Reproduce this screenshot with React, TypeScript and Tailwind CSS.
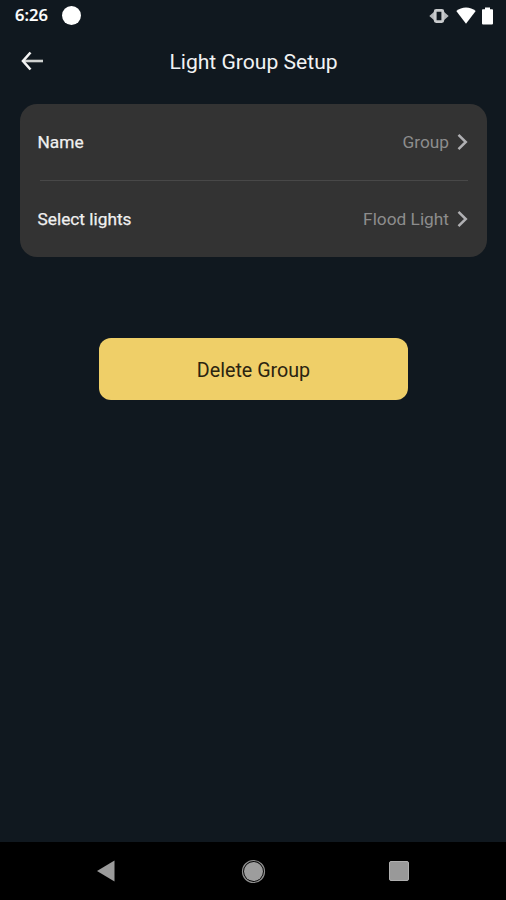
const content = {
  time: "6:26",
  header: "Light Group Setup",
  buttonText: "Delete Group",
};

const rows = [
  { label: "Name", value: "Group" },
  { label: "Select lights", value: "Flood Light" },
];

const StatusBar = () => (
  <div className="flex h-[31px] items-center justify-between pl-[15px] pr-[13px] text-white">
    <div className="flex items-center gap-[13px]">
      <span className="w-[34px] whitespace-nowrap font-['Open_Sans',sans-serif] text-[16.5px] font-semibold leading-none [-webkit-text-stroke:0.2px_#fff]">
        {content.time}
      </span>
      <span className="h-[19px] w-[19px] rounded-full bg-white" />
    </div>
    <div className="flex items-center">
      <svg width="20" height="14" viewBox="0 0 20 14">
        <path d="M6 2 0.3 7 6 12ZM14 2 19.7 7 14 12Z" fill="#b4b7ba" />
        <rect x="6.2" y="1.4" width="7.6" height="11.2" rx="1" fill="#10181f" stroke="#c9cbcd" strokeWidth="2.8" />
      </svg>
      <svg className="mb-px ml-[7px]" width="20" height="17" viewBox="0 0 20 17">
        <path d="M0.3 4C5.5-.8 14.5-.8 19.7 4L10 16.7Z" fill="#fff" />
      </svg>
      <svg className="ml-[6px]" width="11" height="18" viewBox="0 0 11 18">
        <path d="M3 0.5h5v1.8h2.2q.8 0 .8.8v13.4q0 1-1 1H1q-1 0-1-1V3.1q0-.8.8-.8H3Z" fill="#fff" />
      </svg>
    </div>
  </div>
);

const Header = () => (
  <header className="grid h-[60px] grid-cols-[50px_1fr_50px] items-center">
    <button className="pl-[21px]" aria-label="Back">
      <svg width="23" height="20" viewBox="0 0 23 20" fill="none" strokeWidth="2.6">
        <path d="M2 10H22" stroke="#cfd2d0" />
        <path d="M9.5 1.5 2 10 9.5 18.5" stroke="#f4f4f4" />
      </svg>
    </button>
    <h1 className="pl-px pt-[2px] text-center text-[21.1px] leading-[30px] text-[#f1f2f3]">{content.header}</h1>
  </header>
);

const SettingRow = ({ label, value }: { label: string; value: string }) => (
  <button className="flex h-[76px] w-full items-center justify-between">
    <span className="pl-[0.5px] text-[17.3px] leading-[24px] text-[#f0f0f0] [-webkit-text-stroke:0.25px_#f0f0f0]">{label}</span>
    <span className="flex items-center gap-[8px] text-[17.3px] text-[#8d8d8d]">
      <span className="pt-[2px]">{value}</span>
      <svg width="11" height="18" viewBox="0 0 11 18" fill="none">
        <path d="M1.5 1.8 8.8 9 1.5 16.2" stroke="#b0b0b3" strokeWidth="2.5" />
      </svg>
    </span>
  </button>
);

const App = () => {
  return (
    <div className="flex h-[900px] w-[506px] flex-col overflow-hidden bg-[#10181f] font-[Roboto,sans-serif]">
      <StatusBar />
      <Header />

      <main className="flex flex-1 flex-col pt-[13px]">
        <section className="ml-[20px] mr-[19px] h-[153px] rounded-[17px] bg-[#333333] pl-[17px] pr-[19px]">
          <SettingRow {...rows[0]} />
          <div className="ml-[3px] h-px bg-[#484848]" />
          <SettingRow {...rows[1]} />
        </section>

        <button className="ml-[99px] mt-[81px] h-[62px] w-[309px] rounded-[12px] bg-[#efcf68] pt-[3px] text-[19.7px] text-[#2b2410]">
          {content.buttonText}
        </button>
      </main>

      <nav className="flex h-[58px] items-center bg-black pl-[97px]">
        <svg width="18" height="22" viewBox="0 0 18 22">
          <path d="M0 11 17.5 0.5V21.5Z" fill="#9b9b9b" />
        </svg>
        <svg className="ml-[126px]" width="25" height="25" viewBox="0 0 25 25">
          <circle cx="12.5" cy="12.5" r="11" fill="none" stroke="#8f8f8f" strokeWidth="1.2" />
          <circle cx="12.5" cy="12.5" r="9.5" fill="#9d9d9d" />
        </svg>
        <span className="ml-[123px] h-[20px] w-[20px] rounded-[2px] border border-[#b0b0b0] bg-[#999999]" />
      </nav>
    </div>
  );
};

export default App;
